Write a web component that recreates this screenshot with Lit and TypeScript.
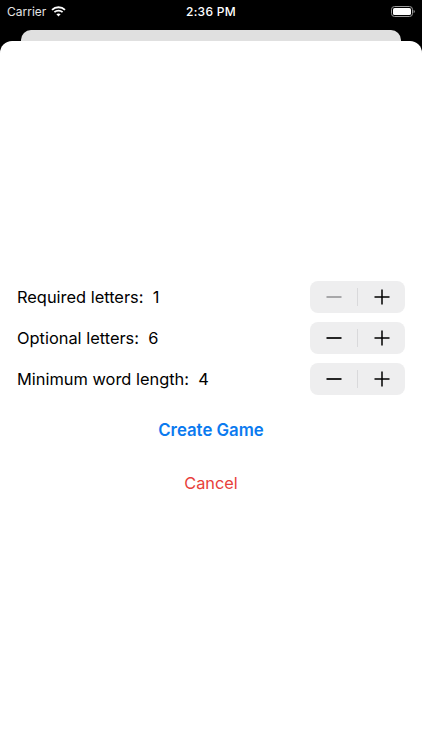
import { LitElement, html, css, svg } from "lit";
import { customElement } from "lit/decorators.js";

@customElement("app-root")
export class AppRoot extends LitElement {
  static styles = css`
    :host { display: block; width: 422px; height: 750px; background: #000; overflow: hidden;
      font-family: Inter, "Liberation Sans", sans-serif; color: #000; }
    .status { height: 30px; display: grid; grid-template-columns: 1fr auto 1fr; align-items: center;
      color: #fff; font-size: 12px; padding: 0 7px 8px 7px; box-sizing: border-box; }
    .left { display: flex; align-items: center; gap: 5px; color: #e4e4e4; font-size: 12px; }
    .time { font-weight: 500; font-size: 12px; letter-spacing: 0.3px; }
    .right { display: flex; justify-content: flex-end; }
    .back { height: 11px; margin: 0 21px; background: #e0e0e0; border-radius: 10px 10px 0 0; }
    .sheet { height: 709px; background: #fff; border-radius: 12px 12px 0 0; box-sizing: border-box;
      padding: 240px 17px 0 17px; display: flex; flex-direction: column; }
    .rows { display: flex; flex-direction: column; gap: 9px; }
    .row { display: flex; justify-content: space-between; align-items: center; height: 32px; font-size: 16.4px; }
    .label { white-space: pre; }
    .stepper { width: 95px; height: 32px; background: #eeeeef; border-radius: 8px; display: flex; align-items: center; }
    .seg { flex: 1; display: flex; align-items: center; justify-content: center; }
    .seg svg { display: block; }
    .div { width: 1px; height: 18px; background: #d9d9db; }
    .actions { display: flex; flex-direction: column; align-items: center; }
    .create { margin-top: 19px; height: 33px; line-height: 33px; font-size: 16.8px; font-weight: 600; color: #0a7aef; }
    .cancel { margin-top: 20px; height: 33px; line-height: 33px; font-size: 16.35px; color: #e8403a; }
  `;

  private minus(color: string) {
    return html`<svg width="16" height="16" viewBox="0 0 16 16"><path d="M0.5 8H15.5" stroke=${color} stroke-width="1.7" fill="none"/></svg>`;
  }
  private plus() {
    return html`<svg width="16" height="16" viewBox="0 0 16 16"><path d="M0.5 8H15.5M8 0.5V15.5" stroke="#000" stroke-width="1.5" fill="none"/></svg>`;
  }

  private row(label: string, value: number, minDisabled = false) {
    return html`<div class="row">
      <span class="label">${label}:  ${value}</span>
      <div class="stepper">
        <div class="seg">${this.minus(minDisabled ? "#9a9a9c" : "#000")}</div>
        <div class="div"></div>
        <div class="seg">${this.plus()}</div>
      </div>
    </div>`;
  }

  render() {
    return html`
      <div class="status">
        <div class="left">
          <span>Carrier</span>
          <svg width="15" height="11" viewBox="0 0 15 11">
            ${svg`<path d="M1 3.8C4.6 0.4 10.4 0.4 14 3.8" stroke="#fff" stroke-width="1.8" fill="none"/>
            <path d="M3.4 6.2C5.7 4.1 9.3 4.1 11.6 6.2" stroke="#fff" stroke-width="1.8" fill="none"/>
            <path d="M5.4 8.2L7.5 10.4L9.6 8.2C8.4 7.1 6.6 7.1 5.4 8.2Z" fill="#fff"/>`}
          </svg>
        </div>
        <div class="time">2:36 PM</div>
        <div class="right">
          <svg width="24" height="11" viewBox="0 0 24 11">
            ${svg`<rect x="0.5" y="0.5" width="21" height="10" rx="3" stroke="#9a9a9a" fill="none"/>
            <rect x="2" y="2" width="18" height="7" rx="1.6" fill="#fff"/>
            <path d="M22.6 3.8C23.4 4.1 23.8 4.7 23.8 5.5C23.8 6.3 23.4 6.9 22.6 7.2Z" fill="#9a9a9a"/>`}
          </svg>
        </div>
      </div>
      <div class="back"></div>
      <div class="sheet">
        <div class="rows">
          ${this.row("Required letters", 1, true)}
          ${this.row("Optional letters", 6)}
          ${this.row("Minimum word length", 4)}
        </div>
        <div class="actions">
          <div class="create">Create Game</div>
          <div class="cancel">Cancel</div>
        </div>
      </div>
    `;
  }
}
